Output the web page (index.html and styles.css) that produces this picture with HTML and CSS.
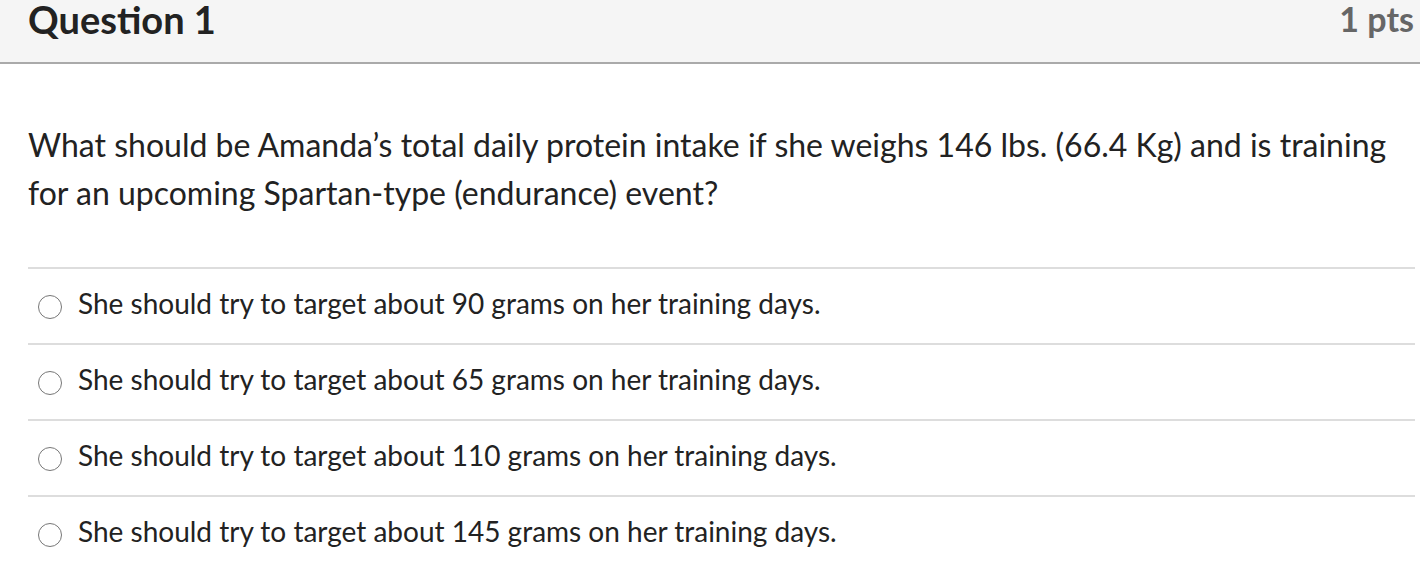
FILE: index.html
```html
<!DOCTYPE html>
<html>
<head>
<meta charset="utf-8">
<link rel="stylesheet" href="styles.css">
</head>
<body>
<div class="question">
  <div class="header">
    <h2 class="title">Question 1</h2>
    <span class="pts">1 pts</span>
  </div>
  <div class="content">
    <p class="text">What should be Amanda’s total daily protein intake if she weighs 146 lbs. (66.4 Kg) and is training for an upcoming Spartan-type (endurance) event?</p>
    <div class="answers">
      <label class="answer"><span class="radio"></span><span class="label">She should try to target about 90 grams on her training days.</span></label>
      <label class="answer"><span class="radio"></span><span class="label">She should try to target about 65 grams on her training days.</span></label>
      <label class="answer"><span class="radio"></span><span class="label">She should try to target about 110 grams on her training days.</span></label>
      <label class="answer"><span class="radio"></span><span class="label">She should try to target about 145 grams on her training days.</span></label>
    </div>
  </div>
</div>
</body>
</html>
```

FILE: styles.css
```css
html, body {
  margin: 0;
  padding: 0;
  background: #ffffff;
}
body {
  font-family: Lato, "Open Sans", sans-serif;
  color: #222;
  width: 1420px;
  height: 588px;
  overflow: hidden;
}
.question {
  width: 1420px;
}
.header {
  display: flex;
  justify-content: space-between;
  align-items: flex-start;
  box-sizing: border-box;
  background: #f5f5f5;
  border-bottom: 2px solid #aaaaaa;
  padding: 0 6px 0 28px;
  height: 64px;
}
.title {
  margin: 0;
  font-size: 38px;
  font-weight: 700;
  line-height: 38px;
  color: #222;
}
.pts {
  font-size: 34px;
  font-weight: 700;
  line-height: 38px;
  color: #666;
}
.content {
  padding: 0 3px 0 28px;
}
.text {
  margin: 0;
  padding-top: 57px;
  font-size: 32px;
  line-height: 48px;
  color: #222;
}
.answers {
  margin-top: 50px;
  margin-right: 2px;
}
.answer {
  display: flex;
  align-items: center;
  height: 76px;
  box-sizing: border-box;
  border-top: 2px solid #dddddd;
  padding-left: 10px;
  padding-bottom: 6px;
}
.radio {
  width: 22px;
  height: 22px;
  border: 1.6px solid #777;
  border-radius: 50%;
  margin-right: 16px;
  flex: none;
  margin-top: 8px;
}
.label {
  font-size: 28px;
  color: #222;
}
```
